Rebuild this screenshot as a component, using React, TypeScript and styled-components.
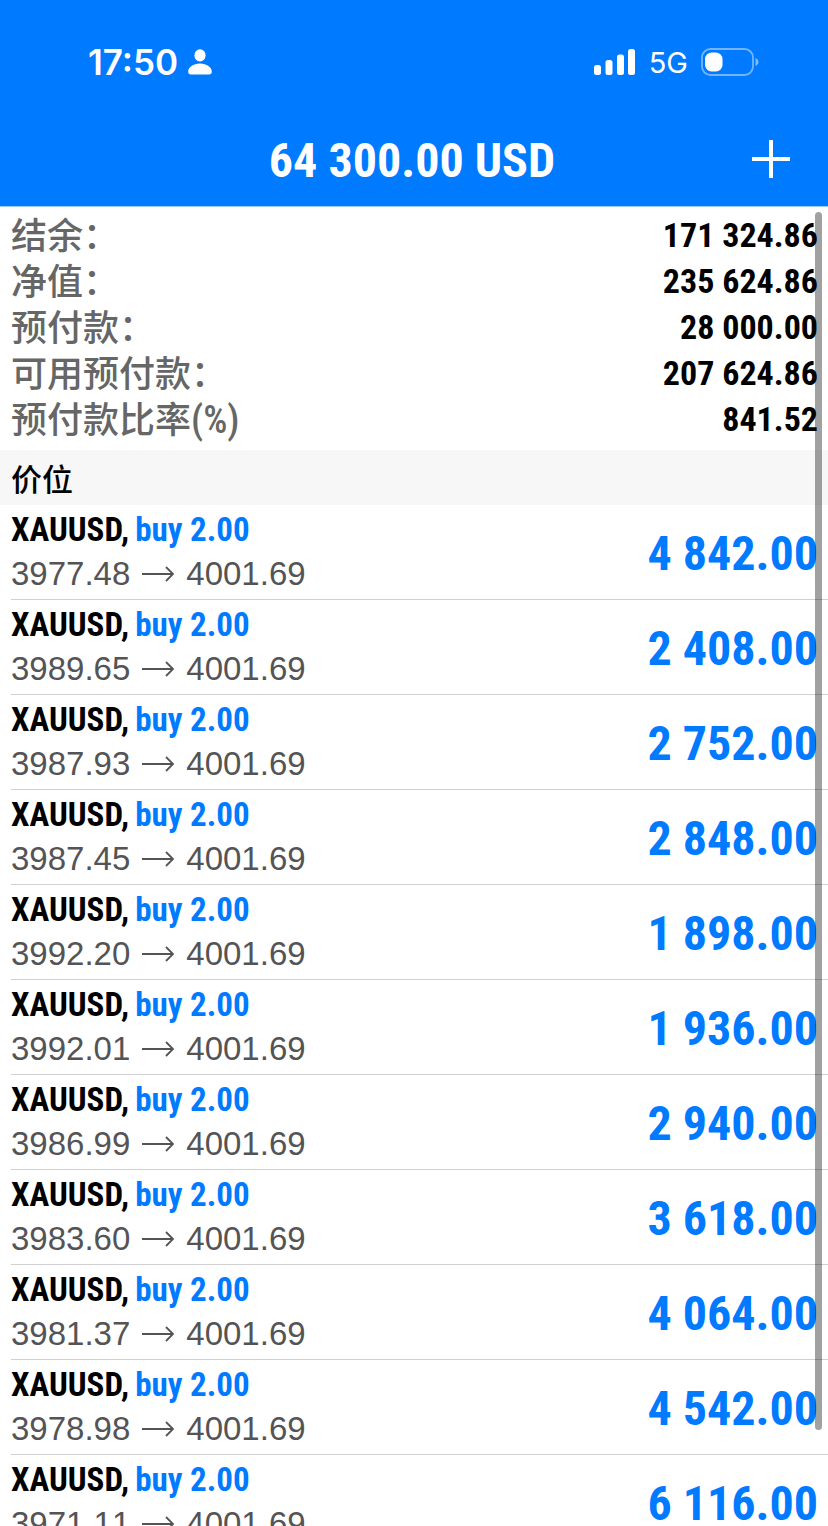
import React from 'react';
import styled, { createGlobalStyle } from 'styled-components';

const BLUE = '#007aff';
const CONDENSED = '"Roboto Condensed", "Arial Narrow", sans-serif';
const CHINESE = '"Noto Sans CJK SC", sans-serif';

const GlobalStyle = createGlobalStyle`
  * { box-sizing: border-box; }
  body { margin: 0; background: #fff; }
`;

const Screen = styled.div`
  display: flex;
  flex-direction: column;
  height: 100vh;
  overflow: hidden;
  background: #fff;
  color: #000;
  font-family: ${CONDENSED};
`;

const Header = styled.header`
  flex: none;
  background: ${BLUE};
  color: #fff;
  border-bottom: 1px solid #9bc9fb;
`;

const StatusBar = styled.div`
  display: flex;
  align-items: center;
  justify-content: space-between;
  height: 112px;
  padding: 12px 69px 0 88px;
  font-family: Inter, sans-serif;
`;

const StatusGroup = styled.div<{ $gap: number }>`
  display: flex;
  align-items: center;
  gap: ${(p) => p.$gap}px;
`;

const Clock = styled.time`
  font-size: 35px;
  font-weight: 600;
  line-height: 40px;
`;

const Network = styled.span`
  padding-top: 2px;
  font-size: 29px;
  line-height: 40px;
`;

const TitleBar = styled.div`
  display: grid;
  grid-template-columns: 1fr auto 1fr;
  align-items: center;
  height: 94px;
  padding: 0 37px 0 33px;
`;

const Title = styled.h1`
  grid-column: 2;
  margin: 0;
  padding-top: 3px;
  font-size: 48px;
  font-weight: 700;
  line-height: 60px;
`;

const AddButton = styled.button`
  justify-self: end;
  display: flex;
  padding: 0;
  border: 0;
  background: none;
  color: inherit;
  cursor: pointer;
`;

const Content = styled.main`
  position: relative;
  flex: 1;
  min-height: 0;
  overflow: hidden;
`;

const ScrollThumb = styled.div`
  position: absolute;
  top: 5px;
  right: 6px;
  bottom: 96px;
  width: 7px;
  border-radius: 4px;
  background: rgba(0, 0, 0, 0.37);
`;

const Summary = styled.dl`
  margin: 0;
  padding: 5px 10px 8px 11px;
`;

const SummaryRow = styled.div`
  display: flex;
  align-items: flex-start;
  justify-content: space-between;
  height: 46px;
`;

const SummaryLabel = styled.dt`
  color: #666;
  font-family: ${CHINESE};
  font-size: 36px;
  font-weight: 500;
  line-height: 42px;
`;

const Unit = styled.span`
  font-family: ${CONDENSED};
  font-size: 38px;
  line-height: 1;
`;

const SummaryValue = styled.dd`
  margin: 0;
  font-size: 34px;
  font-weight: 700;
  line-height: 46px;
`;

const SectionTitle = styled.h2`
  margin: 0;
  padding: 0 11px;
  background: #f7f7f7;
  font-family: ${CHINESE};
  font-size: 31px;
  font-weight: 500;
  line-height: 55px;
`;

const Positions = styled.ul`
  margin: 0;
  padding: 0 0 0 11px;
  list-style: none;
`;

const PositionRow = styled.li`
  display: flex;
  align-items: center;
  justify-content: space-between;
  height: 95px;
  padding-right: 10px;
  border-bottom: 1px solid #d0d0d2;
`;

const Deal = styled.div`
  display: flex;
  gap: 6px;
  font-size: 33px;
  font-weight: 700;
  line-height: 44px;
`;

const Side = styled.span`
  color: ${BLUE};
`;

const Prices = styled.div`
  display: flex;
  align-items: center;
  gap: 11px;
  color: #545456;
  font-family: "Liberation Sans", Arial, sans-serif;
  font-size: 33px;
  font-kerning: none;
  line-height: 44px;
`;

const Profit = styled.strong`
  padding-top: 4px;
  color: ${BLUE};
  font-size: 48px;
  font-weight: 700;
  line-height: 60px;
`;

const summary = [
  { label: '结余：', value: '171 324.86' },
  { label: '净值：', value: '235 624.86' },
  { label: '预付款：', value: '28 000.00' },
  { label: '可用预付款：', value: '207 624.86' },
  { label: '预付款比率', unit: '(%)', value: '841.52' },
];

const positions = [
  ['3977.48', '4 842.00'],
  ['3989.65', '2 408.00'],
  ['3987.93', '2 752.00'],
  ['3987.45', '2 848.00'],
  ['3992.20', '1 898.00'],
  ['3992.01', '1 936.00'],
  ['3986.99', '2 940.00'],
  ['3983.60', '3 618.00'],
  ['3981.37', '4 064.00'],
  ['3978.98', '4 542.00'],
  ['3971.11', '6 116.00'],
];

const PersonIcon = () => (
  <svg width="24" height="26" viewBox="0 0 24 26" fill="currentColor" aria-hidden="true">
    <ellipse cx="12" cy="6.4" rx="5.6" ry="6.2" />
    <path d="M12 14.6c6.8 0 11.8 3.900 11.800 8.200 0 1.700-1 2.700-2.700 2.700H2.900C1.200 25.500.2 24.500.2 22.800c0-4.300 5-8.200 11.800-8.200z" />
  </svg>
);

const SignalIcon = () => (
  <svg width="42" height="26" viewBox="0 0 42 26" fill="currentColor" aria-hidden="true">
    <rect x="0" y="16" width="7" height="10" rx="2.500" />
    <rect x="11.500" y="11" width="7" height="15" rx="2.500" />
    <rect x="23" y="5.500" width="7" height="20.500" rx="2.500" />
    <rect x="34" y="0" width="7" height="26" rx="2.500" />
  </svg>
);

const BatteryIcon = () => (
  <svg width="58" height="28" viewBox="0 0 58 28" fill="none" aria-hidden="true">
    <rect x="1" y="1" width="51" height="26" rx="8.500" stroke="#fff" strokeOpacity="0.45" strokeWidth="1.800" />
    <rect x="4" y="4.500" width="17.500" height="19" rx="6.500" fill="#fff" />
    <path d="M54.500 10c1.900.8 3 2.200 3 4s-1.100 3.200-3 4z" fill="#fff" fillOpacity="0.5" />
  </svg>
);

const PlusIcon = () => (
  <svg width="40" height="40" viewBox="0 0 40 40" stroke="currentColor" strokeWidth="4" aria-hidden="true">
    <path d="M20 1v38M1 20h38" />
  </svg>
);

const ArrowIcon = () => (
  <svg width="34" height="16" viewBox="0 0 34 16" fill="none" stroke="currentColor" strokeWidth="1.800" role="img" aria-label="→">
    <path d="M1 8h31M25 1 32 8l-7 7" />
  </svg>
);

export default function App() {
  return (
    <Screen>
      <GlobalStyle />
      <Header>
        <StatusBar>
          <StatusGroup $gap={10}>
            <Clock>17:50</Clock>
            <PersonIcon />
          </StatusGroup>
          <StatusGroup $gap={13}>
            <SignalIcon />
            <Network>5G</Network>
            <BatteryIcon />
          </StatusGroup>
        </StatusBar>
        <TitleBar>
          <Title>64 300.00 USD</Title>
          <AddButton type="button" aria-label="Add">
            <PlusIcon />
          </AddButton>
        </TitleBar>
      </Header>
      <Content>
        <Summary>
          {summary.map(({ label, unit, value }) => (
            <SummaryRow key={label}>
              <SummaryLabel>
                {label}
                {unit && <Unit>{unit}</Unit>}
              </SummaryLabel>
              <SummaryValue>{value}</SummaryValue>
            </SummaryRow>
          ))}
        </Summary>
        <SectionTitle>价位</SectionTitle>
        <Positions>
          {positions.map(([open, profit]) => (
            <PositionRow key={open}>
              <div>
                <Deal>
                  <span>XAUUSD,</span>
                  <Side>buy 2.00</Side>
                </Deal>
                <Prices>
                  <span>{open}</span>
                  <ArrowIcon />
                  <span>4001.69</span>
                </Prices>
              </div>
              <Profit>{profit}</Profit>
            </PositionRow>
          ))}
        </Positions>
        <ScrollThumb />
      </Content>
    </Screen>
  );
}
